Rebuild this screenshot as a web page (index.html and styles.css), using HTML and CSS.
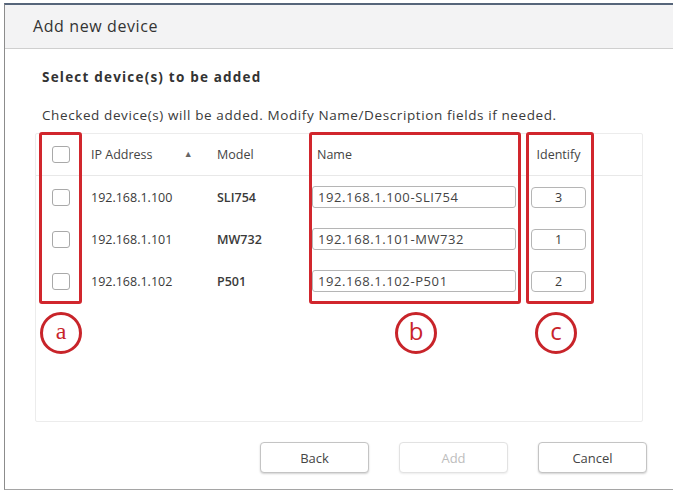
FILE: index.html
```html
<!DOCTYPE html>
<html lang="en">
<head>
  <meta charset="UTF-8" />
  <title>Add new device</title>
  <link rel="stylesheet" href="styles.css">
</head>
<body>
  <div class="dialog">
    <div class="dialog-head">Add new device</div>

    <div class="dialog-body">
      <div class="lead">Select device(s) to be added</div>
      <div class="hint">Checked device(s) will be added. Modify Name/Description fields if needed.</div>

      <div class="panel">
        <div class="grid head">
          <span class="check"></span>
          <span class="ip">IP Address <span class="sort">&#9650;</span></span>
          <span>Model</span>
          <span class="name-h">Name</span>
          <span class="ident-h">Identify</span>
        </div>
        <div class="grid row">
          <span class="check"></span>
          <span>192.168.1.100</span>
          <span class="model">SLI754</span>
          <span class="field">192.168.1.100-SLI754</span>
          <span class="ident">3</span>
        </div>
        <div class="grid row">
          <span class="check"></span>
          <span>192.168.1.101</span>
          <span class="model">MW732</span>
          <span class="field">192.168.1.101-MW732</span>
          <span class="ident">1</span>
        </div>
        <div class="grid row">
          <span class="check"></span>
          <span>192.168.1.102</span>
          <span class="model">P501</span>
          <span class="field">192.168.1.102-P501</span>
          <span class="ident">2</span>
        </div>

        <!-- annotation marks -->
        <div class="mark mark-a"></div>
        <div class="mark mark-b"></div>
        <div class="mark mark-c"></div>
        <div class="bubble bubble-a">a</div>
        <div class="bubble bubble-b">b</div>
        <div class="bubble bubble-c">c</div>
      </div>

      <div class="actions">
        <button class="btn">Back</button>
        <button class="btn" disabled>Add</button>
        <button class="btn">Cancel</button>
      </div>
    </div>
  </div>
</body>
</html>
```

FILE: styles.css
```css
* { box-sizing: border-box; margin: 0; padding: 0; }

body {
  font-family: 'Open Sans', 'Lato', sans-serif;
  background: #fff;
  color: #3a3a3a;
  overflow: hidden;
}

.dialog {
  margin: 3px 0 0 4px;
  height: 487px;
  border-top: 2px solid #56657a;
  border-left: 1px solid #8c8c8c;
  border-bottom: 1px solid #a5a5a5;
}

.dialog-head {
  height: 44px;
  background: #f3f3f4;
  border-bottom: 1px solid #cfcfcf;
  padding: 10px 0 0 28px;
  font-size: 16px;
  line-height: 22px;
  letter-spacing: 0.6px;
  color: #333;
}

.dialog-body {
  padding: 20px 25px 0 30px;
}

.lead {
  font-size: 13.5px;
  font-weight: bold;
  line-height: 16px;
  margin-left: 7px;
  color: #333;
  letter-spacing: 1.2px;
}

.hint {
  font-size: 13.5px;
  line-height: 16px;
  margin: 22px 0 0 7px;
  letter-spacing: 0.6px;
}

.panel {
  position: relative;
  margin-top: 10px;
  width: 608px;
  height: 289px;
  border: 1px solid #ececec;
  border-radius: 2px;
}

.grid {
  display: grid;
  grid-template-columns: 39px 126px 95px 219px 55px;
  align-items: center;
  padding-left: 16px;
  height: 42px;
  font-size: 12.5px;
}

.grid.head {
  border-bottom: 1px solid #e8e8e8;
  color: #444;
}

.check {
  width: 18px;
  height: 17px;
  border: 1px solid #a9a9a9;
  border-radius: 3px;
  background: #fff;
}

.model { font-weight: 600; }

.sort {
  font-size: 9px;
  color: #666;
  margin-left: 28px;
  vertical-align: 2px;
}

.name-h { padding-left: 5px; }

.ident-h { text-align: center; }

.field {
  width: 204px;
  height: 22px;
  line-height: 20px;
  border: 1px solid #b5b5b5;
  border-radius: 3px;
  padding-left: 5px;
  font-size: 13px;
  color: #444;
  letter-spacing: 0.6px;
}

.ident {
  height: 21px;
  line-height: 19px;
  border: 1px solid #b5b5b5;
  border-radius: 4px;
  text-align: center;
}

.mark {
  position: absolute;
  top: -2px;
  height: 172px;
  border: 3px solid #d1262d;
  border-radius: 3px;
}
.mark-a { left: 3px; width: 43px; }
.mark-b { left: 273px; width: 212px; }
.mark-c { left: 490px; width: 68px; }

.bubble {
  position: absolute;
  top: 178px;
  width: 42px;
  height: 42px;
  border: 3px solid #c8242a;
  border-radius: 50%;
  color: #c8242a;
  font-size: 24px;
  line-height: 32px;
  text-align: center;
  background: #fff;
}
.bubble-a { left: 4px; font-family: 'Liberation Serif', serif; }
.bubble-b { left: 359px; }
.bubble-c { left: 499px; }

.actions {
  display: flex;
  justify-content: flex-end;
  gap: 30px;
  margin-top: 20px;
  padding-right: 1px;
}

.btn {
  width: 109px;
  height: 31px;
  background: #fff;
  border: 1px solid #c4c4c4;
  border-radius: 4px;
  box-shadow: 0 1px 2px rgba(0,0,0,0.18);
  font-family: inherit;
  font-size: 13px;
  color: #444;
}

.btn:disabled {
  color: #bdbdbd;
  border-color: #e2e2e2;
  box-shadow: 0 1px 2px rgba(0,0,0,0.08);
}
```
